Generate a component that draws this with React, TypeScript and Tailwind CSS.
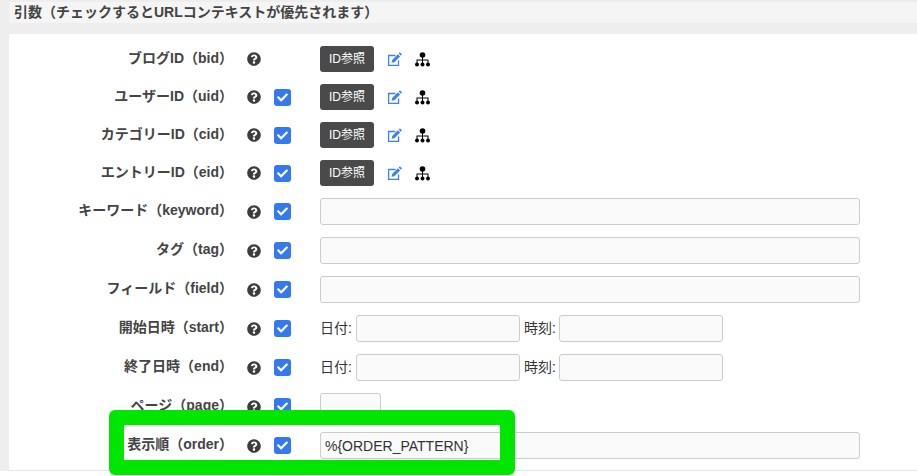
import { FaCheck, FaQuestionCircle } from "react-icons/fa";

const font = "font-['Liberation_Sans','Noto_Sans_CJK_JP',sans-serif]";

const EditIcon = () => (
  <svg viewBox="0 0 16 16" className="ml-[13px] h-[15px] w-[15px] text-[#3b82f6]" fill="currentColor">
    <path d="M1 3h8v1.4H2.4v9.2h9.2V9H13v6H1z" />
    <path d="M5.5 8.500 11.600 2.400l2.400 2.400-6.100 6.100-3 .6zM12.400 1.600l.9-.9c.3-.3.7-.3 1 0l1.300 1.300c.3.3.3.7 0 1l-.9.9z" />
  </svg>
);

const SitemapIcon = () => (
  <svg viewBox="0 0 15 15" className="ml-[13px] h-[15px] w-[15px] text-black" fill="currentColor">
    <circle cx="7.5" cy="3" r="2.8" />
    <circle cx="2" cy="12.6" r="2" />
    <circle cx="7.5" cy="12.6" r="2" />
    <circle cx="13" cy="12.6" r="2" />
    <path d="M7 5h1v2.500h5.500V11h-1V8.500H8V11H7V8.500H2.500V11h-1V7.500H7z" />
  </svg>
);

const Field = ({ w, value }: { w: string; value?: string }) => (
  <input
    readOnly
    value={value ?? ""}
    className={`${w} h-[27px] rounded-[3px] border border-[#ccc] bg-[#fafafa] px-[4px] text-[14px] text-[#333] outline-none`}
  />
);

const Check = () => (
  <span className="flex h-[17px] w-[17px] items-center justify-center rounded-[3px] bg-[#3579f0]">
    <FaCheck className="h-[11px] w-[11px] text-white" />
  </span>
);

const IdRef = () => (
  <div className="flex items-center">
    <button className="h-[26px] w-[54px] rounded-[3px] bg-[#4a4a4a] text-[12px] text-white">ID参照</button>
    <EditIcon />
    <SitemapIcon />
  </div>
);

const DateTime = () => (
  <div className="flex items-center text-[14px] text-[#333]">
    <span className="w-[36px]">日付:</span>
    <Field w="w-[164px]" />
    <span className="ml-[4px] w-[35px]">時刻:</span>
    <Field w="w-[164px]" />
  </div>
);

const Row = ({
  label,
  checked = true,
  h = "h-[39px]",
  children,
}: {
  label: string;
  checked?: boolean;
  h?: string;
  children: React.ReactNode;
}) => (
  <div className={`flex ${h} items-center`}>
    <div className="w-[224px] -translate-y-[1px] whitespace-nowrap text-right text-[14px] font-bold text-[#444]">{label}</div>
    <FaQuestionCircle className="ml-[14px] h-[14px] w-[14px] text-[#3d3d3d]" />
    <div className="ml-[13px] flex w-[17px]">{checked && <Check />}</div>
    <div className="ml-[29px]">{children}</div>
  </div>
);

export default function App() {
  return (
    <div className={`${font} relative h-[476px] w-[917px] overflow-hidden bg-white`}>
      <div className="bg-[#eeeeee] pl-[9px] pt-[2px]">
        <div className="flex h-[21px] items-center bg-[#f5f5f5] pl-[5px] text-[14px] font-bold text-[#444]">
          引数（チェックするとURLコンテキストが優先されます）
        </div>
        <div className="h-[11px]" />
      </div>
      <div className="flex h-[437px] bg-[#eeeeee] pl-[9px]">
        <div className="flex-1 border-b border-[#e5e5e5] bg-white pt-[6px]">
          <Row label="ブログID（bid）" checked={false} h="h-[38px]">
            <IdRef />
          </Row>
          <Row label="ユーザーID（uid）" h="h-[38px]">
            <IdRef />
          </Row>
          <Row label="カテゴリーID（cid）" h="h-[38px]">
            <IdRef />
          </Row>
          <Row label="エントリーID（eid）" h="h-[38px]">
            <IdRef />
          </Row>
          <Row label="キーワード（keyword）">
            <Field w="w-[540px]" />
          </Row>
          <Row label="タグ（tag）">
            <Field w="w-[540px]" />
          </Row>
          <Row label="フィールド（field）">
            <Field w="w-[540px]" />
          </Row>
          <Row label="開始日時（start）">
            <DateTime />
          </Row>
          <Row label="終了日時（end）">
            <DateTime />
          </Row>
          <Row label="ページ（page）">
            <Field w="w-[61px]" />
          </Row>
          <Row label="表示順（order）">
            <Field w="w-[540px]" value="%{ORDER_PATTERN}" />
          </Row>
        </div>
      </div>
      <div className="absolute left-[109px] top-[410px] h-[65px] w-[406px] rounded-[6px] border-[15px] border-[#00e600]" />
    </div>
  );
}
